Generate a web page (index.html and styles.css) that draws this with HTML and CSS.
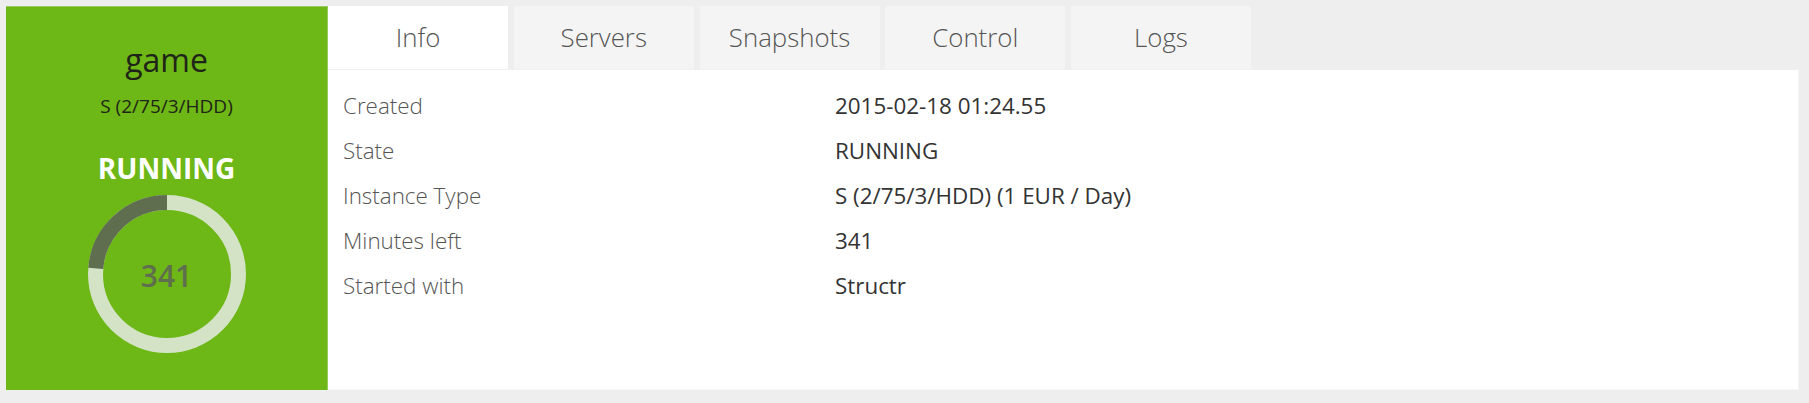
FILE: index.html
```html
<!DOCTYPE html>
<html lang="en">
<head>
<meta charset="utf-8">
<title>game</title>
<link rel="stylesheet" href="styles.css">
</head>
<body>
<div class="instance">
  <aside class="summary">
    <div class="name">game</div>
    <div class="type">S (2/75/3/HDD)</div>
    <div class="state">RUNNING</div>
    <div class="donut">
      <svg class="donut-svg" width="158" height="158" viewBox="0 0 158 158">
        <circle cx="79" cy="79" r="71.5" fill="none" stroke="#d4e3c6" stroke-width="15"/>
        <circle cx="79" cy="79" r="71.5" fill="none" stroke="#5f6e4f" stroke-width="15"
          stroke-dasharray="106.4 449.25" transform="translate(158 0) scale(-1 1) rotate(-90 79 79)"/>
      </svg>
      <div class="donut-value">341</div>
    </div>
  </aside>
  <main class="details">
    <nav class="tabs">
      <div class="tab active">Info</div>
      <div class="tab">Servers</div>
      <div class="tab">Snapshots</div>
      <div class="tab">Control</div>
      <div class="tab">Logs</div>
    </nav>
    <section class="panel">
      <div class="row"><span class="label">Created</span><span class="value">2015-02-18 01:24.55</span></div>
      <div class="row"><span class="label">State</span><span class="value">RUNNING</span></div>
      <div class="row"><span class="label">Instance Type</span><span class="value">S (2/75/3/HDD) (1 EUR / Day)</span></div>
      <div class="row"><span class="label">Minutes left</span><span class="value">341</span></div>
      <div class="row"><span class="label">Started with</span><span class="value">Structr</span></div>
    </section>
  </main>
</div>
</body>
</html>
```
FILE: styles.css
```css
html, body {
  margin: 0;
  padding: 0;
}
body {
  background: #eeeeee;
  font-family: "Open Sans", "Noto Sans", sans-serif;
  color: #333;
}
.instance {
  display: flex;
  padding: 6px 10px 13px 6px;
  height: 384px;
}
.summary {
  box-sizing: border-box;
  width: 322px;
  flex: none;
  background: #6db716;
  border-top: 1px solid #98cb5c;
  border-right: 1px solid #98cb5c;
  display: flex;
  flex-direction: column;
  align-items: center;
  padding-top: 33px;
}
.name {
  font-size: 32px;
  line-height: 40px;
  color: #1f2418;
}
.type {
  margin-top: 14px;
  font-size: 19px;
  line-height: 24px;
  color: #1f2418;
}
.state {
  margin-top: 32px;
  font-size: 28px;
  line-height: 36px;
  font-weight: 700;
  color: #ffffff;
}
.donut {
  margin-top: 9px;
  display: grid;
  place-items: center;
}
.donut-svg, .donut-value {
  grid-area: 1 / 1;
}
.donut-svg {
  display: block;
}
.donut-value {
  font-size: 30px;
  line-height: 30px;
  font-weight: 600;
  color: #5f6e4f;
  padding-top: 3px;
}
.details {
  flex: 1;
  display: flex;
  flex-direction: column;
  min-width: 0;
}
.tabs {
  display: flex;
  gap: 5.75px;
  height: 63px;
}
.tab {
  width: 180px;
  background: #f4f4f4;
  text-align: center;
  font-size: 25.8px;
  font-weight: 300;
  line-height: 63px;
  color: #555;
}
.tab.active {
  background: #ffffff;
}
.panel {
  flex: 1;
  background: #ffffff;
  border-top: 1px solid #f0f0f0;
  border-right: 1px solid #f6f6f6;
  border-bottom: 1px solid #f6f6f6;
  padding: 13px 15px 0 15px;
}
.row {
  display: grid;
  grid-template-columns: 492px 1fr;
  line-height: 45px;
  font-size: 22.4px;
}
.label {
  font-weight: 300;
  color: #555;
}
.value {
  font-weight: 400;
  color: #333;
}
```
